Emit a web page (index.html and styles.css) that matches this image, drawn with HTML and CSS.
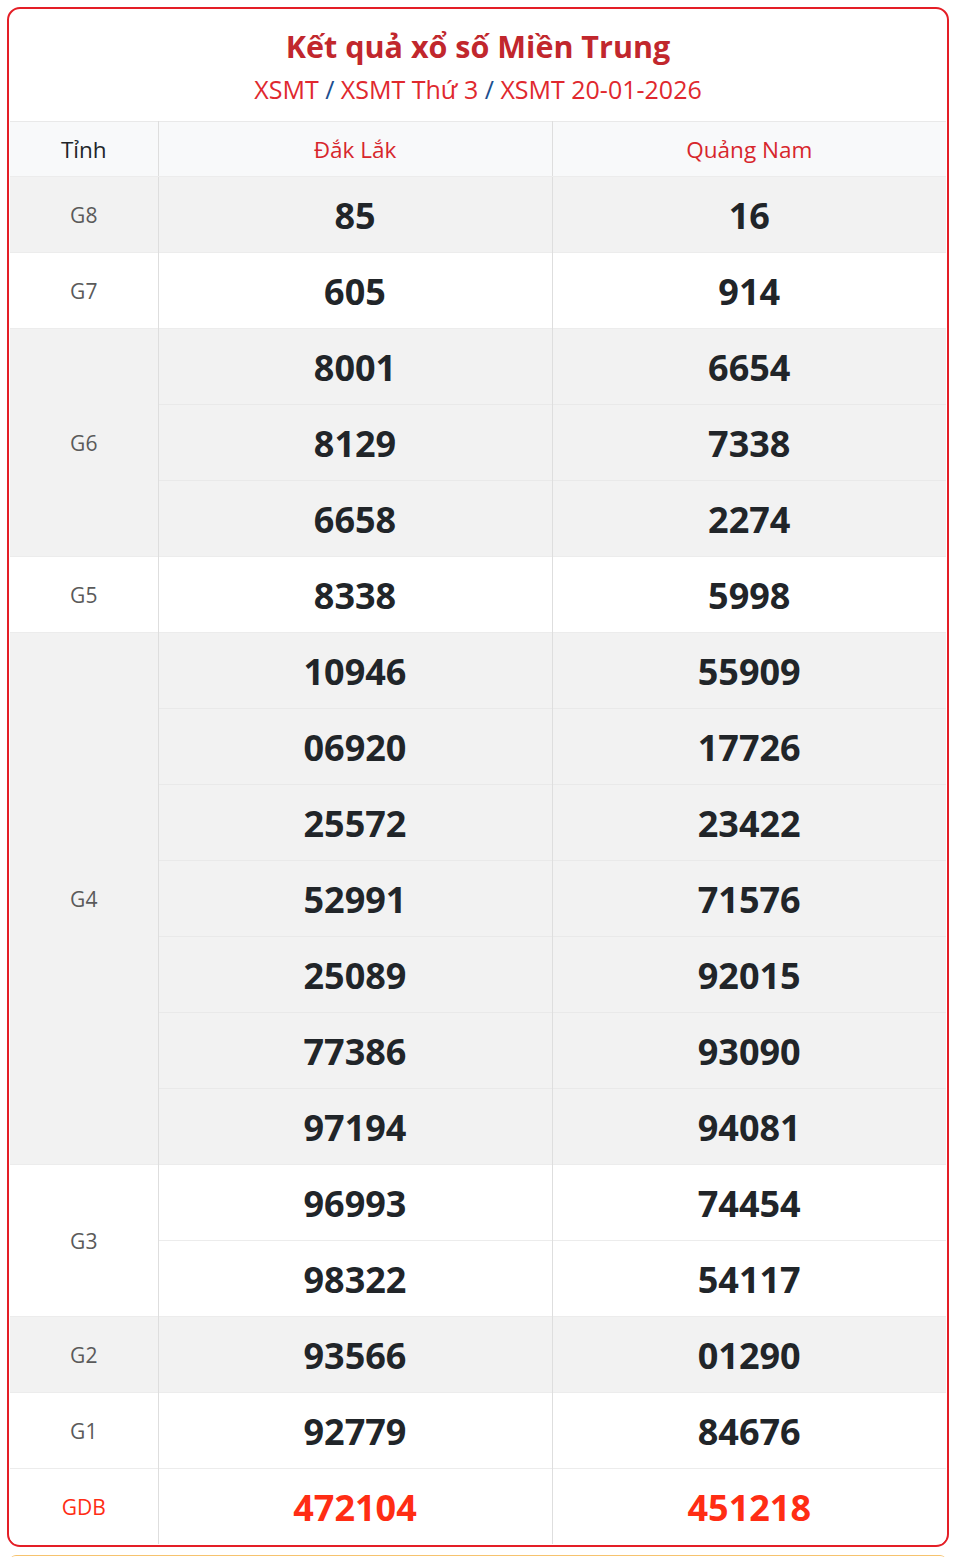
FILE: index.html
```html
<!DOCTYPE html>
<html lang="vi">
<head>
<meta charset="utf-8">
<title>Kết quả xổ số Miền Trung</title>
<link rel="stylesheet" href="styles.css">
</head>
<body>
<div class="card">
  <div class="head">
    <h1 class="title">Kết quả xổ số Miền Trung</h1>
    <div class="crumbs"><a>XSMT</a> <span class="sep">/</span> <a>XSMT Thứ 3</a> <span class="sep">/</span> <a>XSMT 20-01-2026</a></div>
  </div>
  <table class="res">
    <colgroup><col class="c1"><col class="c2"><col class="c3"></colgroup>
    <thead>
      <tr><th class="lbl-h">Tỉnh</th><th class="prov">Đắk Lắk</th><th class="prov">Quảng Nam</th></tr>
    </thead>
    <tbody>
      <tr class="g"><td class="lbl">G8</td><td class="n">85</td><td class="n">16</td></tr>
      <tr class="w"><td class="lbl">G7</td><td class="n">605</td><td class="n">914</td></tr>
      <tr class="g"><td class="lbl" rowspan="3">G6</td><td class="n">8001</td><td class="n">6654</td></tr>
      <tr class="g sub"><td class="n">8129</td><td class="n">7338</td></tr>
      <tr class="g sub"><td class="n">6658</td><td class="n">2274</td></tr>
      <tr class="w"><td class="lbl">G5</td><td class="n">8338</td><td class="n">5998</td></tr>
      <tr class="g"><td class="lbl" rowspan="7">G4</td><td class="n">10946</td><td class="n">55909</td></tr>
      <tr class="g sub"><td class="n">06920</td><td class="n">17726</td></tr>
      <tr class="g sub"><td class="n">25572</td><td class="n">23422</td></tr>
      <tr class="g sub"><td class="n">52991</td><td class="n">71576</td></tr>
      <tr class="g sub"><td class="n">25089</td><td class="n">92015</td></tr>
      <tr class="g sub"><td class="n">77386</td><td class="n">93090</td></tr>
      <tr class="g sub"><td class="n">97194</td><td class="n">94081</td></tr>
      <tr class="w"><td class="lbl" rowspan="2">G3</td><td class="n">96993</td><td class="n">74454</td></tr>
      <tr class="w sub"><td class="n">98322</td><td class="n">54117</td></tr>
      <tr class="g"><td class="lbl">G2</td><td class="n">93566</td><td class="n">01290</td></tr>
      <tr class="w"><td class="lbl">G1</td><td class="n">92779</td><td class="n">84676</td></tr>
      <tr class="w db"><td class="lbl">GDB</td><td class="n">472104</td><td class="n">451218</td></tr>
    </tbody>
  </table>
</div>
<div class="next"></div>
</body>
</html>
```
FILE: styles.css
```css
html, body {
  margin: 0;
  padding: 0;
  background: #fff;
}
body {
  padding: 7px 7px 0 7px;
  font-family: "Open Sans", "Noto Sans", "DejaVu Sans", sans-serif;
  color: #212529;
}
.card {
  border: 2px solid #e41e26;
  border-radius: 13px;
  padding: 1px;
  overflow: hidden;
  background: #fff;
}
.head {
  height: 111px;
  display: flex;
  flex-direction: column;
  align-items: center;
  padding-top: 16px;
  box-sizing: border-box;
}
.title {
  margin: 0;
  font-size: 30.5px;
  line-height: 40px;
  font-weight: 700;
  color: #c1272d;
}
.crumbs {
  margin-top: 6px;
  font-size: 25px;
  line-height: 34px;
  color: #e0282e;
}
.crumbs .sep {
  color: #1b4f8f;
}
.res {
  width: 100%;
  border-collapse: collapse;
  table-layout: fixed;
  border-top: 1px solid #e9e9e9;
}
.c1 { width: 148px; }
th {
  height: 54px;
  background: #f8f9fa;
  font-weight: 400;
  font-size: 22.5px;
  padding: 0;
  border-right: 1px solid #dedede;
  border-bottom: 1px solid #ececec;
}
th:last-child, td:last-child { border-right: 0; }
.lbl-h { color: #212529; }
.prov { color: #d7262c; }
td {
  height: 75px;
  padding: 0;
  text-align: center;
  border-right: 1px solid #dedede;
  border-top: 1px solid #ececec;
}
tr.g td { background: #f2f2f2; }
tr.w td { background: #fff; }
tr.g.sub td { border-top-color: #e9e9e9; }
.lbl {
  font-size: 21px;
  color: #5a5a5a;
}
.n {
  font-size: 36px;
  line-height: 48px;
  font-weight: 700;
  color: #212529;
  padding-top: 3px;
  height: 72px;
}
tr.db td { color: #ff2d14; }
.next {
  margin: 8px 3px 0 3px;
  height: 6px;
  border-top: 1px solid #f6c36e;
  border-radius: 6px 6px 0 0;
}
```
